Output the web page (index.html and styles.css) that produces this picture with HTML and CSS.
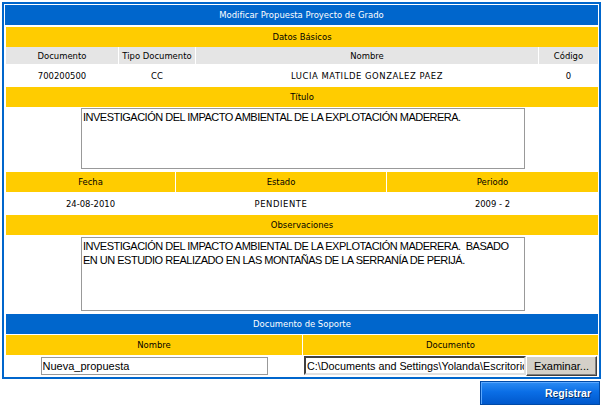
FILE: index.html
```html
<!DOCTYPE html>
<html lang="es">
<head>
<meta charset="utf-8">
<title>Modificar Propuesta Proyecto de Grado</title>
<link rel="stylesheet" href="styles.css">
</head>
<body>
<div class="page">
  <div class="panel">
    <div class="panel-title">Modificar Propuesta Proyecto de Grado</div>
    <div class="panel-body">
      <div class="bar">Datos Básicos</div>
      <div class="grid grid-datos">
        <div class="col-head">Documento</div>
        <div class="col-head">Tipo Documento</div>
        <div class="col-head">Nombre</div>
        <div class="col-head">Código</div>
        <div class="cell">700200500</div>
        <div class="cell">CC</div>
        <div class="cell cell-caps">LUCIA MATILDE GONZALEZ PAEZ</div>
        <div class="cell">0</div>
      </div>
      <div class="bar">Título</div>
      <div class="text-row text-row-titulo">
        <textarea class="area area-titulo" readonly>INVESTIGACIÓN DEL IMPACTO AMBIENTAL DE LA EXPLOTACIÓN MADERERA.</textarea>
      </div>
      <div class="grid grid-fecha">
        <div class="bar">Fecha</div>
        <div class="bar">Estado</div>
        <div class="bar">Periodo</div>
        <div class="cell">24-08-2010</div>
        <div class="cell cell-caps">PENDIENTE</div>
        <div class="cell">2009 - 2</div>
      </div>
      <div class="bar">Observaciones</div>
      <div class="text-row text-row-obs">
        <textarea class="area area-obs" readonly>INVESTIGACIÓN DEL IMPACTO AMBIENTAL DE LA EXPLOTACIÓN MADERERA.  BASADO EN UN ESTUDIO REALIZADO EN LAS MONTAÑAS DE LA SERRANÍA DE PERIJÁ.</textarea>
      </div>
      <div class="bar bar-blue">Documento de Soporte</div>
      <div class="grid grid-doc">
        <div class="bar">Nombre</div>
        <div class="bar">Documento</div>
        <div class="input-cell input-cell-name">
          <input class="field field-name" type="text" value="Nueva_propuesta">
        </div>
        <div class="input-cell input-cell-file">
          <input class="field field-file" type="text" readonly value="C:\Documents and Settings\Yolanda\Escritorio\propuesta.doc">
          <button class="browse" type="button">Examinar...</button>
        </div>
      </div>
    </div>
  </div>
  <div class="actions">
    <button class="submit" type="button">Registrar</button>
  </div>
</div>
</body>
</html>
```

FILE: styles.css
```css
* {
  box-sizing: border-box;
}

body {
  margin: 0;
  background: #ffffff;
  color: #000000;
  font-family: "DejaVu Sans Condensed", "DejaVu Sans", "Liberation Sans", sans-serif;
  font-stretch: condensed;
  font-size: 9.4px;
}

.page {
  width: 601px;
  padding: 2px 0 0 2px;
}

.panel {
  width: 599px;
  border: 2px solid #0066cc;
  padding: 1px;
}

.panel-title {
  height: 20px;
  line-height: 20px;
  background: #0066cc;
  color: #ffffff;
  text-align: center;
}

.panel-body {
  display: flex;
  flex-direction: column;
  margin: 2px 0 0 1px;
}

.bar {
  height: 20px;
  line-height: 20px;
  background: #ffcc00;
  text-align: center;
}

.bar-blue {
  background: #0066cc;
  color: #ffffff;
  margin-bottom: 1px;
}

.grid {
  display: grid;
  column-gap: 1px;
}

.grid-datos {
  grid-template-columns: 112px 76px 342px 59px;
}

.grid-fecha {
  grid-template-columns: 169px 210px 211px;
}

.grid-doc {
  grid-template-columns: 296px 295px;
}

.col-head {
  height: 17px;
  line-height: 17px;
  background: #e5e5e5;
  text-align: center;
}

.cell {
  height: 23px;
  line-height: 23px;
  text-align: center;
}

.cell-caps {
  letter-spacing: 0.55px;
}

.text-row {
  display: flex;
  padding-left: 75px;
}

.text-row-titulo {
  height: 65px;
  padding-top: 1px;
}

.text-row-obs {
  height: 79px;
  padding-top: 2px;
}

.area {
  display: block;
  width: 444px;
  margin: 0;
  padding: 1px 1px;
  border: 1px solid #999999;
  resize: none;
  overflow: hidden;
  font-family: "Liberation Sans", Arial, sans-serif;
  font-size: 11px;
  letter-spacing: -0.5px;
  line-height: 14px;
  color: #000000;
  background: #ffffff;
}

.area-titulo {
  height: 61px;
}

.area-obs {
  height: 74px;
}

.input-cell {
  height: 21px;
  display: flex;
}

.input-cell-name {
  justify-content: center;
  padding-top: 2px;
}

.input-cell-file {
  padding: 1px 0 0 1px;
}

.field {
  margin: 0;
  font-family: "Liberation Sans", Arial, sans-serif;
  font-size: 11px;
  color: #000000;
  background: #ffffff;
  outline: none;
}

.field-name {
  width: 227px;
  height: 18px;
  padding: 0 1px;
  border: 1px solid #999999;
}

.field-file {
  width: 222px;
  height: 19px;
  padding: 0 0 0 1px;
  border: 2px solid;
  border-color: #404040 #e0e0e0 #e0e0e0 #404040;
  font-size: 10.8px;
}

.browse {
  width: 71px;
  height: 20px;
  margin: 0;
  padding: 0;
  font-family: "Liberation Sans", Arial, sans-serif;
  font-size: 11px;
  color: #000000;
  background: #d4d0c8;
  border: 1px solid;
  border-color: #ffffff #404040 #404040 #ffffff;
  box-shadow: inset -1px -1px 0 #808080;
}

.actions {
  display: flex;
  justify-content: flex-end;
  width: 599px;
  padding: 2px 1px 0 0;
}

.submit {
  width: 120px;
  height: 24px;
  margin: 0;
  padding: 0 8px 0 0;
  text-align: right;
  font-family: "Liberation Sans", Arial, sans-serif;
  font-size: 10.5px;
  font-weight: bold;
  color: #ffffff;
  text-shadow: 1px 1px 0 #00336b;
  background: linear-gradient(#2c8cf4, #0a6ee6 45%, #0058cc);
  border: 1px solid #004aa8;
  box-shadow: inset 1px 1px 0 #5aa8ff;
}
```
